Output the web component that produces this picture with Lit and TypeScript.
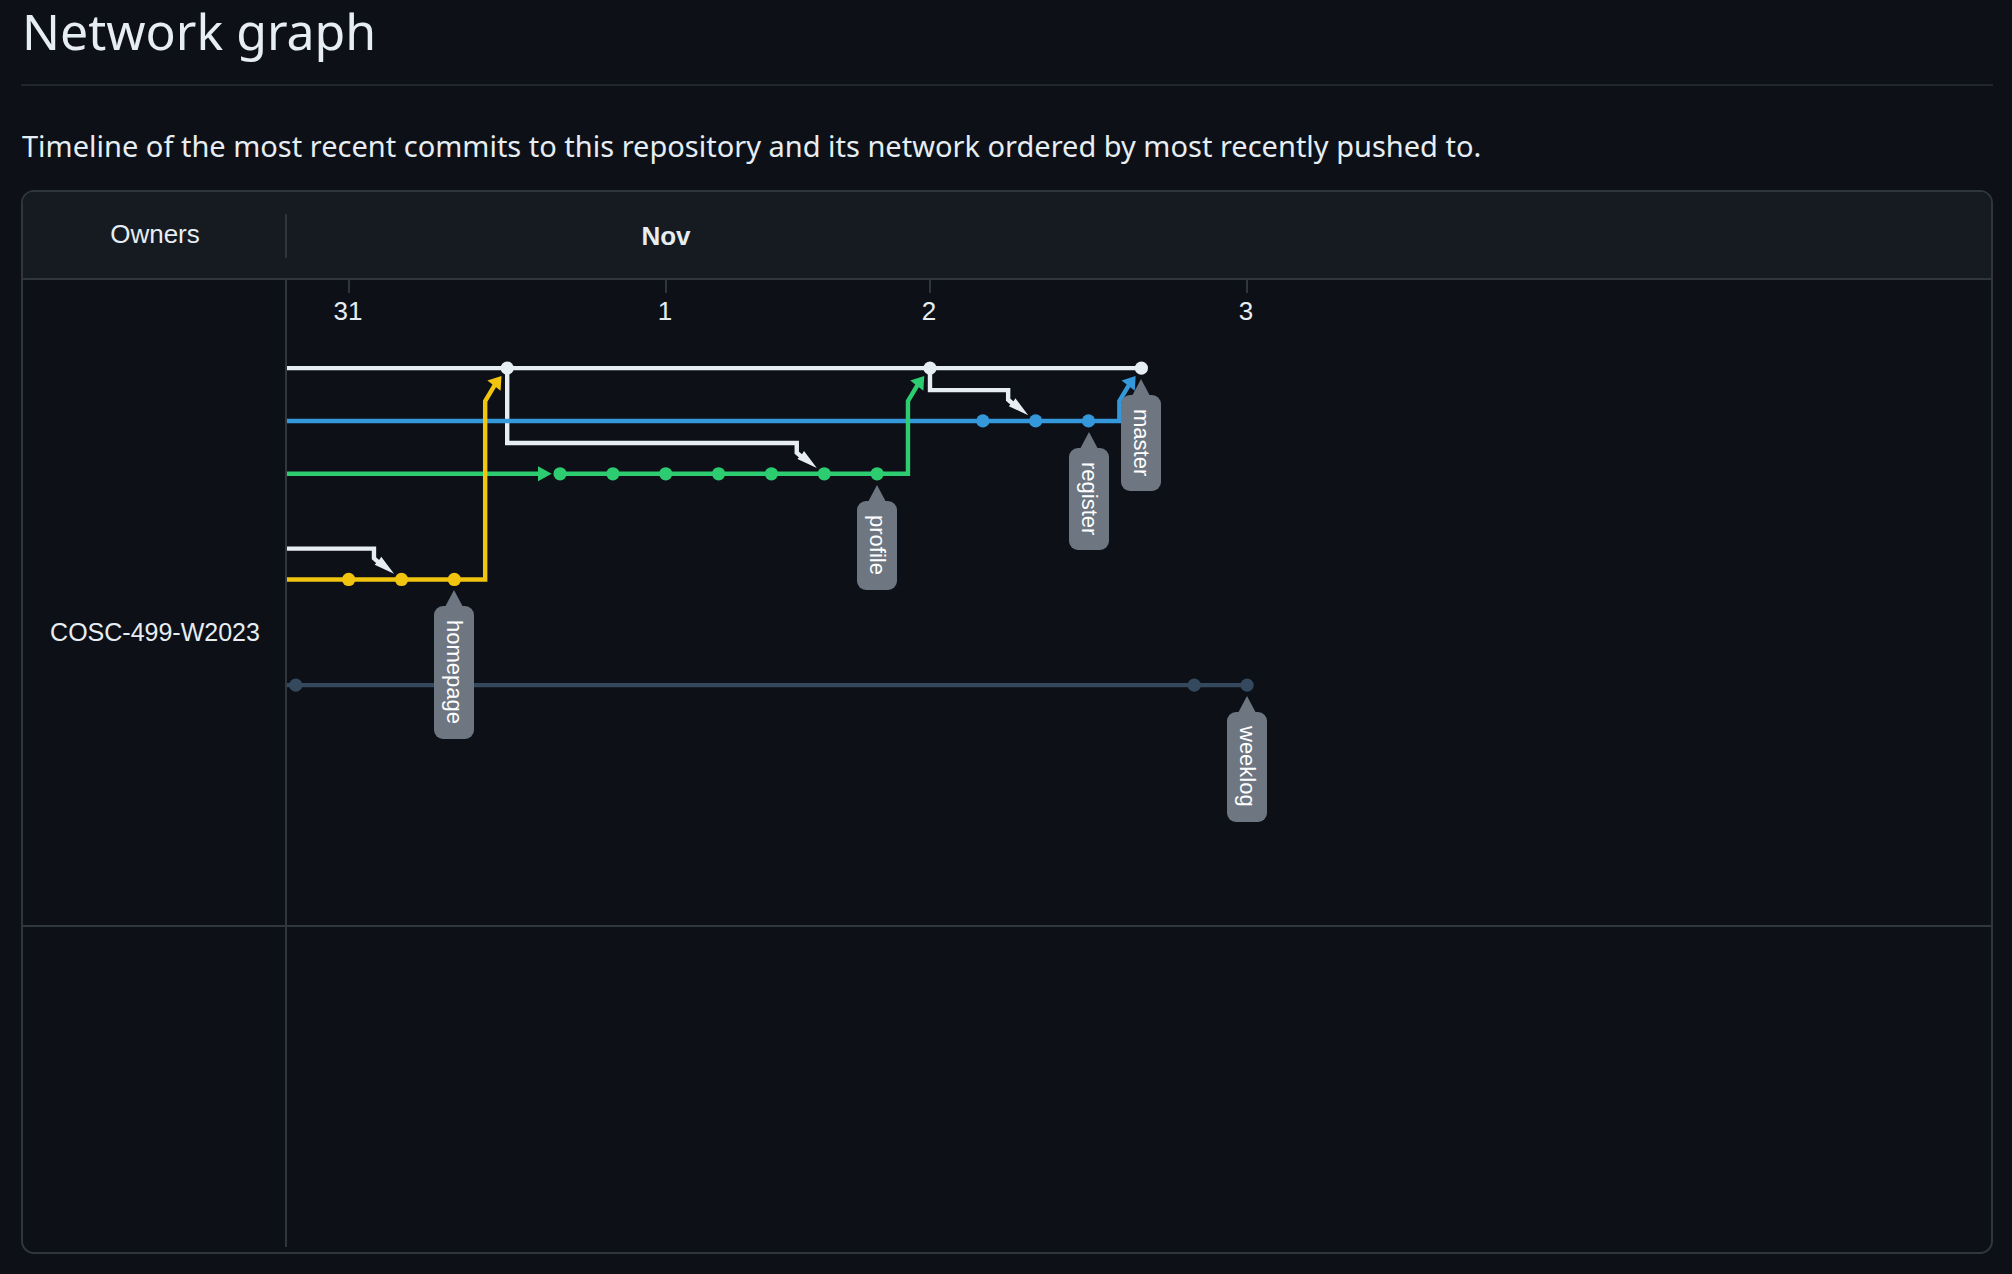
import { LitElement, html, svg, css } from "lit";
import { customElement } from "lit/decorators.js";

type Point = [number, number];

interface Lane {
  name: string;
  row: number;
  color: string;
  start: number;
  commits: number[];
  mergesInto?: number;
  arrowAt?: number;
}

interface Fork {
  from?: number;
  to: number;
  row: number;
}

// One graph unit covers SCALE pixels; commits and rows sit STEP units apart.
const SCALE = 2.202;
const STEP = 24;
const cx = (slot: number) => 4 + STEP * slot;
const cy = (row: number) => 40 + STEP * row;
const px = (units: number) => Math.round(units * SCALE);

const MAIN_COLOR = "#e6edf3";

const MAIN: Lane = { name: "master", row: 0, color: MAIN_COLOR, start: 0, commits: [4, 12, 16] };

const LANES: Lane[] = [
  { name: "weeklog", row: 6, color: "#34495e", start: 0, commits: [0, 17, 18] },
  { name: "register", row: 1, color: "#3498db", start: 0, commits: [13, 14, 15], mergesInto: 16 },
  { name: "profile", row: 2, color: "#2ecc71", start: 0, commits: [5, 6, 7, 8, 9, 10, 11], mergesInto: 12, arrowAt: 5 },
  { name: "homepage", row: 4, color: "#f1c40f", start: 0, commits: [1, 2, 3], mergesInto: 4 },
];

const FORKS: Fork[] = [
  { to: 2, row: 4 },
  { from: 4, to: 10, row: 2 },
  { from: 12, to: 14, row: 1 },
];

const DAYS = [
  { label: "31", slot: 1 },
  { label: "1", slot: 7 },
  { label: "2", slot: 12 },
  { label: "3", slot: 18 },
];

const MONTHS = [{ label: "Nov", slot: 7 }];

const points = (list: Point[]) => list.map((p) => p.join(",")).join(" ");

@customElement("branch-tag")
class BranchTag extends LitElement {
  static styles = css`
    :host {
      display: block;
      box-sizing: border-box;
      width: 40px;
      padding: 14px 0 15px;
      border-radius: 9px;
      background: #6e7681;
      color: #ffffff;
      font: 22px/40px "Liberation Sans", Arial, sans-serif;
      writing-mode: vertical-rl;
      white-space: nowrap;
    }
    .pointer {
      position: absolute;
      top: -16px;
      left: 11px;
      width: 18px;
      height: 17px;
      background: #6e7681;
      clip-path: polygon(50% 0, 100% 100%, 0 100%);
    }
  `;

  render() {
    return html`<span class="pointer"></span><slot></slot>`;
  }
}

@customElement("network-graph")
class NetworkGraph extends LitElement {
  static styles = css`
    :host {
      display: block;
      position: relative;
      overflow: hidden;
    }
    .canvas {
      display: block;
      width: 100%;
      height: 100%;
    }
    .tick {
      fill: #30363d;
    }
    .day {
      fill: #e6edf3;
      font: 26px "Liberation Sans", Arial, sans-serif;
      text-anchor: middle;
    }
    .line {
      fill: none;
      stroke-width: 2;
    }
    .tag {
      position: absolute;
    }
  `;

  private drawFork(fork: Fork) {
    const x = cx(fork.to);
    const y = cy(fork.row);
    const route: Point[] = [
      [x - 12.5, y - 14],
      [x - 12.5, y - 9.6],
      [x - 9.5, y - 7],
    ];
    if (fork.from === undefined) {
      route.unshift([0, y - 14]);
    } else {
      route.unshift([cx(fork.from), cy(0)], [cx(fork.from), y - 14]);
    }
    const head: Point[] = [
      [x - 3.4, y - 2.6],
      [x - 9.2, y - 10.3],
      [x - 10, y - 9.1],
      [x - 12.2, y - 6.7],
    ];
    return svg`
      <polyline class="line" stroke=${MAIN_COLOR} points=${points(route)} />
      <polygon fill=${MAIN_COLOR} points=${points(head)} />
    `;
  }

  private drawLane(lane: Lane) {
    const y = cy(lane.row);
    const last = cx(lane.commits[lane.commits.length - 1]);
    const route: Point[] = [];
    let head;
    if (lane.mergesInto !== undefined) {
      const x = cx(lane.mergesInto);
      route.push([x - 10, y], [x - 10, 55], [x - 5, 46.6]);
      const tip: Point[] = [
        [x - 2.6, 43.6],
        [x - 9, 45.6],
        [x - 3, 50.3],
      ];
      head = svg`<polygon fill=${lane.color} points=${points(tip)} />`;
    } else {
      route.push([last, y]);
    }
    let arrow;
    let lead;
    let start: Point = [lane.start, y];
    if (lane.arrowAt !== undefined) {
      const x = cx(lane.arrowAt);
      lead = svg`<line class="line" stroke=${lane.color} x1="0" y1=${y} x2=${x - 9} y2=${y} />`;
      arrow = svg`<polygon fill=${lane.color} points=${points([
        [x - 10, y - 3.4],
        [x - 3.8, y],
        [x - 10, y + 3.4],
      ])} />`;
      start = [x, y];
    }
    return svg`
      ${lead}${arrow}
      <polyline class="line" stroke=${lane.color} points=${points([start, ...route])} />
      ${head}
      ${lane.commits.map((slot) => svg`<circle fill=${lane.color} cx=${cx(slot)} cy=${y} r="3" />`)}
    `;
  }

  render() {
    return html`
      <svg class="canvas" role="img" aria-label="Network graph">
        ${DAYS.map(
          (day) => svg`
            <rect class="tick" x=${px(cx(day.slot)) - 1} y="0" width="2" height="13" />
            <text class="day" x=${px(cx(day.slot)) - 1} y="40">${day.label}</text>
          `
        )}
        <g transform="scale(${SCALE})">
          ${FORKS.map((fork) => this.drawFork(fork))}
          ${LANES.map((lane) => this.drawLane(lane))}
          ${this.drawLane(MAIN)}
        </g>
      </svg>
      ${[...LANES, MAIN].map((lane) => {
        const x = px(cx(lane.commits[lane.commits.length - 1])) - 20;
        const y = px(cy(lane.row)) + 27;
        return html`<branch-tag class="tag" style="left:${x}px;top:${y}px">${lane.name}</branch-tag>`;
      })}
    `;
  }
}

@customElement("app-root")
class AppRoot extends LitElement {
  static styles = css`
    :host {
      display: flex;
      flex-direction: column;
      box-sizing: border-box;
      min-height: 100vh;
      padding: 0 19px 20px 21px;
      background: #0d1117;
      color: #e6edf3;
      font-family: "Noto Sans", "Open Sans", sans-serif;
    }
    .title {
      margin: 0;
      height: 84px;
      padding-left: 1px;
      border-bottom: 2px solid #21262d;
      font-size: 50px;
      font-weight: 400;
      line-height: 62px;
    }
    .intro {
      margin: 40px 0 24px;
      padding-left: 1px;
      font-size: 29px;
      line-height: 40px;
    }
    .panel {
      flex: 1;
      display: flex;
      flex-direction: column;
      overflow: hidden;
      border: 2px solid #30363d;
      border-radius: 13px;
      font-family: "Liberation Sans", Arial, sans-serif;
    }
    .row {
      display: grid;
      grid-template-columns: 264px 1fr;
      border-bottom: 2px solid #30363d;
    }
    .head {
      height: 86px;
      background: #161b22;
    }
    .rest {
      flex: 1;
      border-bottom: 0;
      padding-bottom: 5px;
    }
    .cell {
      display: flex;
      align-items: center;
      justify-content: center;
      padding-left: 2px;
      border-right: 2px solid #30363d;
    }
    .owners {
      margin: 22px 0 20px;
      font-size: 26px;
      line-height: 40px;
      align-items: flex-start;
    }
    .owner {
      padding-top: 60px;
      font-size: 25px;
    }
    .months {
      width: 100%;
      height: 100%;
    }
    .month {
      fill: #e6edf3;
      font: bold 26px "Liberation Sans", Arial, sans-serif;
      text-anchor: middle;
    }
    .graph {
      height: 645px;
    }
  `;

  render() {
    return html`
      <h1 class="title">Network graph</h1>
      <p class="intro">
        Timeline of the most recent commits to this repository and its network ordered by most recently pushed to.
      </p>
      <section class="panel">
        <div class="row head">
          <div class="cell owners">Owners</div>
          <svg class="months">
            ${MONTHS.map((m) => svg`<text class="month" x=${px(cx(m.slot))} y="53">${m.label}</text>`)}
          </svg>
        </div>
        <div class="row">
          <div class="cell owner">COSC-499-W2023</div>
          <network-graph class="graph"></network-graph>
        </div>
        <div class="row rest">
          <div class="cell"></div>
        </div>
      </section>
    `;
  }
}
